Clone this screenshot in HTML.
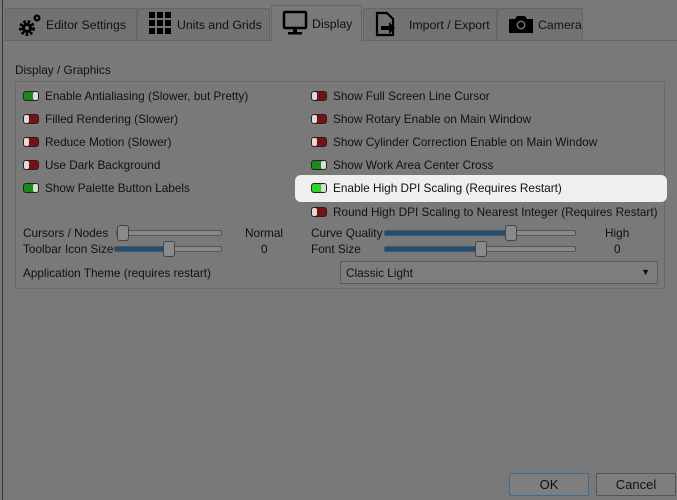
<html><head><style>
body{margin:0;width:677px;height:500px;background:#797979;font-family:"Liberation Sans",sans-serif;font-size:11.8px;color:#111;position:relative;overflow:hidden}
.a{position:absolute;white-space:nowrap}
.tab{position:absolute;top:8px;height:32px;border:1px solid #666;border-bottom:none;background:#727272;box-sizing:border-box;border-radius:2px 2px 0 0}
.tab span{position:absolute;top:9px;font-size:12.3px}
.tg{position:absolute;width:14px;height:8px;border:1px solid #222;border-radius:3px;background:#7a1010}
.tg.on{background:#1a8a1a}
.tg::after{content:"";position:absolute;top:0;width:5px;height:8px;background:#ddd;border-radius:2px}
.tg.on::after{right:0}.tg::after{left:0}
.tg.on::after{left:auto}
.tr{position:absolute;height:4px;border:1px solid #555;background:#888;border-radius:2px}
.fill{position:absolute;left:0;top:0;height:4px;background:#1d4f7a}
.th{position:absolute;width:10px;height:14px;background:#8a8a8a;border:1px solid #444;border-radius:3px;top:-6px}
.btn{position:absolute;top:473px;width:80px;height:23px;border:1px solid #555;box-sizing:border-box;background:#7e7e7e;text-align:center;line-height:21px;font-size:13px;border-radius:2px}
</style></head><body>
<div class="a" style="left:2px;top:0;width:1px;height:500px;background:#333"></div>
<div class="a" style="left:4px;top:40px;width:673px;height:1px;background:#666"></div>
<div class="tab" style="left:5px;width:132px"><svg class="a" style="left:11px;top:3px" width="26" height="26" viewBox="0 0 26 26"><circle cx="10" cy="16" r="6" fill="none" stroke="#000" stroke-width="4" stroke-dasharray="2.5 1.6"/><circle cx="10" cy="16" r="5" fill="#000"/><circle cx="10" cy="16" r="2" fill="#727272"/><circle cx="20" cy="6" r="3.5" fill="#000"/><circle cx="20" cy="6" r="1.2" fill="#727272"/></svg><span style="left:40px">Editor Settings</span></div>
<div class="tab" style="left:137px;width:133px"><svg class="a" style="left:10px;top:2px" width="26" height="26"><g fill="#000"><rect x="1" y="1" width="6" height="6"/><rect x="9" y="1" width="6" height="6"/><rect x="17" y="1" width="6" height="6"/><rect x="1" y="9" width="6" height="6"/><rect x="9" y="9" width="6" height="6"/><rect x="17" y="9" width="6" height="6"/><rect x="1" y="17" width="6" height="6"/><rect x="9" y="17" width="6" height="6"/><rect x="17" y="17" width="6" height="6"/></g></svg><span style="left:39px">Units and Grids</span></div>
<div class="tab" style="left:271px;top:5px;height:36px;width:91px;background:#797979;border-color:#666"><svg class="a" style="left:10px;top:4px" width="26" height="26"><rect x="2" y="2" width="22" height="16" fill="none" stroke="#000" stroke-width="2.5" rx="1"/><rect x="11" y="18" width="4" height="4" fill="#000"/><rect x="6" y="22" width="14" height="2.5" fill="#000"/></svg><span style="left:40px;top:11px">Display</span></div>
<div class="tab" style="left:363px;width:134px"><svg class="a" style="left:10px;top:2px" width="26" height="28"><path d="M3 2h10l6 6v16H3z" fill="none" stroke="#000" stroke-width="2.2"/><path d="M7 15h8v-4l6 6-6 6v-4H7z" fill="#000"/></svg><span style="left:45px">Import / Export</span></div>
<div class="tab" style="left:497px;width:86px"><svg class="a" style="left:10px;top:4px" width="26" height="22"><path d="M1 6h6l2-3h8l2 3h6v14H1z" fill="#000"/><circle cx="13" cy="12" r="4.5" fill="#727272"/><circle cx="13" cy="12" r="3" fill="#000"/></svg><span style="left:40px">Camera</span></div>
<div class="a" style="left:15px;top:63px">Display / Graphics</div>
<div class="a" style="left:15px;top:81px;width:650px;height:208px;border:1px solid #6a6a6a;box-sizing:border-box"></div>
<div class="a" style="left:295px;top:175px;width:372px;height:27px;background:#efefef;border-radius:6px"></div>
<div class="tg on" style="left:23px;top:91px"></div><div class="a" style="left:45px;top:89px">Enable Antialiasing (Slower, but Pretty)</div>
<div class="tg" style="left:23px;top:114px"></div><div class="a" style="left:45px;top:112px">Filled Rendering (Slower)</div>
<div class="tg" style="left:23px;top:137px"></div><div class="a" style="left:45px;top:135px">Reduce Motion (Slower)</div>
<div class="tg" style="left:23px;top:160px"></div><div class="a" style="left:45px;top:158px">Use Dark Background</div>
<div class="tg on" style="left:23px;top:183px"></div><div class="a" style="left:45px;top:181px">Show Palette Button Labels</div>
<div class="tg" style="left:311px;top:91px"></div><div class="a" style="left:333px;top:89px">Show Full Screen Line Cursor</div>
<div class="tg" style="left:311px;top:114px"></div><div class="a" style="left:333px;top:112px">Show Rotary Enable on Main Window</div>
<div class="tg" style="left:311px;top:137px"></div><div class="a" style="left:333px;top:135px">Show Cylinder Correction Enable on Main Window</div>
<div class="tg on" style="left:311px;top:160px"></div><div class="a" style="left:333px;top:158px">Show Work Area Center Cross</div>
<div class="tg on" style="left:311px;top:183px;background:#2ad52a"></div><div class="a" style="left:333px;top:181px">Enable High DPI Scaling (Requires Restart)</div>
<div class="tg" style="left:311px;top:207px"></div><div class="a" style="left:333px;top:205px">Round High DPI Scaling to Nearest Integer (Requires Restart)</div>
<div class="a" style="left:23px;top:226px">Cursors / Nodes</div>
<div class="tr" style="left:116px;top:230px;width:104px"><div class="th" style="left:0"></div></div>
<div class="a" style="left:245px;top:226px">Normal</div>
<div class="a" style="left:23px;top:242px">Toolbar Icon Size</div>
<div class="tr" style="left:114px;top:246px;width:106px"><div class="fill" style="width:55px"></div><div class="th" style="left:48px"></div></div>
<div class="a" style="left:261px;top:242px">0</div>
<div class="a" style="left:311px;top:226px">Curve Quality</div>
<div class="tr" style="left:384px;top:230px;width:190px"><div class="fill" style="width:125px"></div><div class="th" style="left:120px"></div></div>
<div class="a" style="left:605px;top:226px">High</div>
<div class="a" style="left:311px;top:242px">Font Size</div>
<div class="tr" style="left:384px;top:246px;width:190px"><div class="fill" style="width:95px"></div><div class="th" style="left:90px"></div></div>
<div class="a" style="left:614px;top:242px">0</div>
<div class="a" style="left:23px;top:266px">Application Theme (requires restart)</div>
<div class="a" style="left:340px;top:261px;width:318px;height:23px;border:1px solid #5a5a5a;box-sizing:border-box;background:#7d7d7d"><span class="a" style="left:5px;top:4px">Classic Light</span><span class="a" style="right:7px;top:5px;font-size:9px">▼</span></div>
<div class="btn" style="left:509px;border-color:#3e6a90">OK</div>
<div class="btn" style="left:596px">Cancel</div>
</body></html>
